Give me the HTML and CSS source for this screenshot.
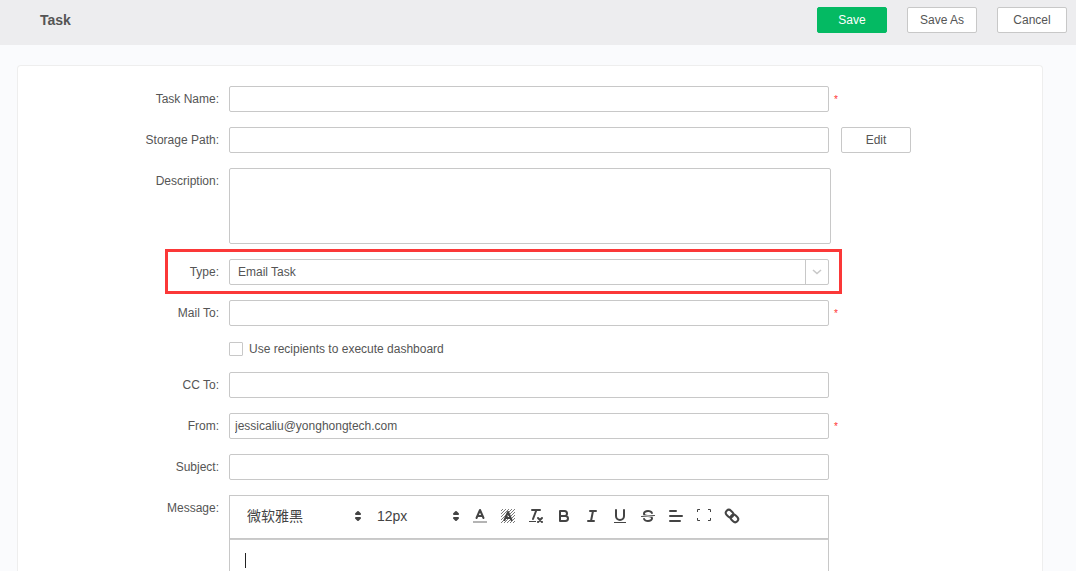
FILE: index.html
```html
<!DOCTYPE html>
<html lang="en">
<head>
<meta charset="utf-8">
<title>Task</title>
<link rel="stylesheet" href="styles.css">
</head>
<body>
<header class="topbar">
  <h1 class="title">Task</h1>
  <div class="actions">
    <button class="btn primary" type="submit" form="task">Save</button>
    <button class="btn" type="button">Save As</button>
    <button class="btn" type="button">Cancel</button>
  </div>
</header>
<main class="page">
  <form class="card" id="task">
    <div class="row">
      <label class="label" for="name">Task Name:</label>
      <input class="field" id="name" type="text">
      <span class="required">*</span>
    </div>
    <div class="row">
      <label class="label" for="path">Storage Path:</label>
      <input class="field" id="path" type="text">
      <button class="btn edit" type="button">Edit</button>
    </div>
    <div class="row">
      <label class="label" for="desc">Description:</label>
      <textarea class="field area" id="desc"></textarea>
    </div>
    <div class="row marked">
      <label class="label" for="type">Type:</label>
      <div class="field select-box">
        <select class="select" id="type"><option>Email Task</option></select>
        <span class="arrow"><svg width="10" height="6" viewBox="0 0 10 6"><path d="M1 1l4 3.5L9 1" fill="none" stroke="#c8c8c8" stroke-width="1.6"/></svg></span>
      </div>
    </div>
    <div class="row">
      <label class="label" for="to">Mail To:</label>
      <input class="field" id="to" type="text">
      <span class="required">*</span>
    </div>
    <div class="row check-row">
      <span class="label"></span>
      <label class="check"><input class="tick" type="checkbox">Use recipients to execute dashboard</label>
    </div>
    <div class="row">
      <label class="label" for="cc">CC To:</label>
      <input class="field" id="cc" type="text">
    </div>
    <div class="row">
      <label class="label" for="from">From:</label>
      <input class="field" id="from" type="text" value="jessicaliu@yonghongtech.com">
      <span class="required">*</span>
    </div>
    <div class="row">
      <label class="label" for="subject">Subject:</label>
      <input class="field" id="subject" type="text">
    </div>
    <div class="row message">
      <span class="label" id="message-label">Message:</span>
      <div class="editor">
        <div class="toolbar">
          <div class="picker font">
            <select class="picker-select" aria-label="Font"><option>微软雅黑</option></select>
            <svg class="icon updown" viewBox="0 0 18 18"><path class="solid" d="M7 11l2 2 2-2zM7 7l2-2 2 2z"/></svg>
          </div>
          <div class="picker size">
            <select class="picker-select" aria-label="Size"><option>12px</option></select>
            <svg class="icon updown" viewBox="0 0 18 18"><path class="solid" d="M7 11l2 2 2-2zM7 7l2-2 2 2z"/></svg>
          </div>
          <button class="tool" type="button" aria-label="Text color"><svg class="icon" viewBox="0 0 18 18"><path class="swatch" d="M2 14h14v2H2z"/><path d="M5.500 11L9 3l3.500 8M11.600 9H6.400"/></svg></button>
          <button class="tool" type="button" aria-label="Background color"><svg class="icon" viewBox="0 0 18 18"><path class="hatch" d="M2 4l2-2M2 7l5-5M2 10l8-8M2 13l11-11M2 16L16 2M5 16L16 5M8 16l8-8M11 16l5-5M14 16l2-2"/><path d="M5.500 13L9 5l3.500 8M11.600 11H6.400"/></svg></button>
          <button class="tool" type="button" aria-label="Clear format"><svg class="icon" viewBox="0 0 18 18"><path d="M5 3h8M6 12l3.400-9M11 11l4 4M15 11l-4 4"/><path class="fill" d="M2 14h7v1H2z"/></svg></button>
          <button class="tool" type="button" aria-label="Bold"><svg class="icon" viewBox="0 0 18 18"><path d="M5 4h4.500a2.500 2.500 0 0 1 0 5H5zM5 9h5.500a2.500 2.500 0 0 1 0 5H5z"/></svg></button>
          <button class="tool" type="button" aria-label="Italic"><svg class="icon" viewBox="0 0 18 18"><path d="M7 4h6M5 14h6M8 14l2-10"/></svg></button>
          <button class="tool" type="button" aria-label="Underline"><svg class="icon" viewBox="0 0 18 18"><path d="M5 3v6a4 4 0 0 0 8 0V3"/><path class="fill" d="M3 15h12v1H3z"/></svg></button>
          <button class="tool" type="button" aria-label="Strike"><svg class="icon" viewBox="0 0 18 18"><path class="thin" d="M15.500 8.500l-13 1"/><path class="fill" d="M9.007,8C6.542,7.791,6,7.519,6,6.5,6,5.792,7.283,5,9,5c1.571,0,2.765.679,2.969,1.309a1,1,0,0,0,1.9-.617C13.356,4.106,11.354,3,9,3,6.2,3,4,4.538,4,6.5a3.2,3.2,0,0,0,.5,1.843ZM8.984,10C11.457,10.208,12,10.479,12,11.5c0,.708-1.283,1.5-3,1.5-1.571,0-2.765-.679-2.969-1.309a1,1,0,1,0-1.9.617C4.644,13.894,6.646,15,9,15c2.8,0,5-1.538,5-3.5a3.2,3.2,0,0,0-.5-1.843Z"/></svg></button>
          <button class="tool" type="button" aria-label="Align"><svg class="icon" viewBox="0 0 18 18"><path d="M3 9h12M3 14h10M3 4h6"/></svg></button>
          <button class="tool" type="button" aria-label="Full screen"><svg class="icon" viewBox="0 0 18 18"><path class="corner" d="M2.500 5V2.500H5M13 2.500h2.500V5M2.500 11v2.500H5M13 13.500h2.500V11"/></svg></button>
          <button class="tool" type="button" aria-label="Link"><svg class="icon" viewBox="0 0 18 18"><g transform="rotate(45 9 9)"><rect x="1.500" y="6" width="8.200" height="6" rx="3"/><rect x="8.300" y="6" width="8.200" height="6" rx="3"/></g></svg></button>
        </div>
        <div class="content" role="textbox" contenteditable="true" aria-labelledby="message-label"><span class="caret"></span></div>
      </div>
    </div>
  </form>
</main>
</body>
</html>
```
FILE: styles.css
```css
*, *::after { box-sizing: border-box; }

body {
  margin: 0;
  height: 100vh;
  display: flex;
  flex-direction: column;
  overflow: hidden;
  background: #fafbfd;
  color: #555;
  font: 12px/16px "Liberation Sans", Arial, "Noto Sans CJK SC", sans-serif;
}

input, select, textarea, button { font: inherit; color: inherit; }

.topbar {
  flex: none;
  display: flex;
  align-items: center;
  justify-content: space-between;
  padding: 7px 9px 12px 40px;
  background: #ededef;
}

.title { margin: 0; font-size: 14px; }
.actions { display: flex; gap: 20px; }

.btn {
  width: 70px;
  height: 26px;
  padding: 0;
  border: 1px solid #c8c8c8;
  border-radius: 2px;
  background: #fff;
}

.primary { border-color: #04ba63; background: #04ba63; color: #fff; }

.page {
  flex: 1;
  display: flex;
  padding: 20px 33px 0 17px;
}

.card {
  flex: 1;
  display: flex;
  flex-direction: column;
  gap: 15px;
  padding: 20px 20px 0 0;
  border: 1px solid #eee;
  border-bottom: 0;
  border-radius: 4px 4px 0 0;
  background: #fff;
}

.row { display: flex; align-items: flex-start; }

.label {
  flex: none;
  width: 201px;
  margin-right: 10px;
  padding-top: 5px;
  text-align: right;
}

.field {
  flex: 0 1 600px;
  min-width: 0;
  height: 26px;
  padding: 0 5px;
  border: 1px solid #c8c8c8;
  border-radius: 2px;
  background: #fff;
  outline: 0;
}

.area { flex-basis: 602px; height: 76px; resize: none; }

.required { margin-left: 5px; padding-top: 6px; color: #f33; font-size: 10px; }
.edit { margin-left: 12px; }

.marked { position: relative; }

.marked::after {
  content: "";
  position: absolute;
  top: -10px;
  bottom: -9px;
  left: 147px;
  width: 677px;
  border: 3px solid #fb3838;
  pointer-events: none;
}

.select-box { display: flex; padding: 0; }

.select {
  flex: 1;
  padding: 0 8px;
  border: 0;
  background: none;
  appearance: none;
  outline: 0;
}

.arrow {
  width: 23px;
  display: flex;
  align-items: center;
  justify-content: center;
  border-left: 1px solid #c8c8c8;
}

.check { display: flex; align-items: center; gap: 6px; }
.check-row { height: 16px; }
.check-row .label { padding: 0; }

.tick {
  width: 14px;
  height: 14px;
  margin: 0;
  border: 1px solid #c8c8c8;
  border-radius: 1px;
  background: #fff;
  appearance: none;
}

.message { flex: 1; align-items: stretch; }

.editor {
  flex: 0 1 600px;
  min-width: 0;
  display: flex;
  flex-direction: column;
}

.toolbar {
  display: flex;
  align-items: flex-start;
  height: 44px;
  padding: 8px;
  border: 1px solid #c8c8c8;
}

.picker {
  flex: none;
  display: flex;
  align-items: center;
  height: 24px;
  font-size: 14px;
  color: #444;
}

.font { width: 130px; }
.size { width: 98px; }

.picker-select {
  flex: 1;
  min-width: 0;
  padding: 0 0 0 9px;
  border: 0;
  background: none;
  appearance: none;
  outline: 0;
}

.icon {
  display: block;
  width: 18px;
  height: 18px;
  fill: none;
  stroke: #444;
  stroke-width: 2;
  stroke-linecap: round;
  stroke-linejoin: round;
}

.updown { flex: none; margin-right: 1px; }
.solid { fill: #444; }
.fill { fill: #444; stroke: none; }
.swatch { fill: #b4b4b4; stroke: none; }
.thin { stroke-width: 1; }
.corner { stroke-width: 1; stroke-linecap: butt; }
.hatch { stroke-width: 0.7; stroke-linecap: butt; }

.tool {
  flex: none;
  width: 28px;
  height: 24px;
  padding: 3px 5px;
  border: 0;
  background: none;
}

.content {
  flex: 1;
  padding: 13px 15px;
  border: 1px solid #c8c8c8;
  border-top-color: #ccc;
  border-bottom: 0;
  outline: 0;
}

.caret { display: block; width: 1px; height: 15px; background: #222; }
```
